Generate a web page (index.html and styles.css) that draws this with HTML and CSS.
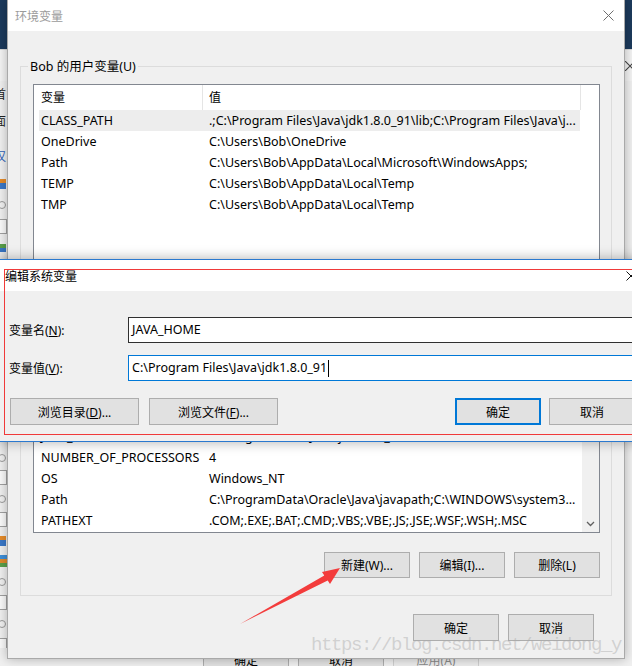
FILE: index.html
```html
<!DOCTYPE html>
<html lang="zh-CN">
<head>
<meta charset="utf-8">
<title>环境变量</title>
<link rel="stylesheet" href="styles.css">
</head>
<body>
<div class="desktop">

  <div class="bgwin">
    <div class="bgtitle">
      <svg class="bgclose" width="10" height="10" viewBox="0 0 10 10"><path d="M0 0L10 10M10 0L0 10" stroke="#444" stroke-width="1.1" fill="none"/></svg>
    </div>
    <div class="bgside">
      <span class="frag ch f1">首</span>
      <span class="frag ch f2">面</span>
      <span class="frag ch blue f3">仅</span>
      <span class="frag ico f4"></span>
      <span class="frag circ f5"></span>
      <span class="frag box f6"></span>
      <span class="frag ico green f7"></span>
      <span class="frag circ f8"></span>
      <span class="frag box f9"></span>
      <span class="frag circ f10"></span>
      <span class="frag box f11"></span>
      <span class="frag ico f12"></span>
      <span class="frag stripes f13"></span>
      <span class="frag circ f14"></span>
      <span class="frag box f15"></span>
      <span class="frag circ f16"></span>
      <span class="frag box f17"></span>
    </div>
    <div class="bgfooter">
      <span class="bgbtn">确定</span>
      <span class="bgbtn">取消</span>
      <span class="bgbtn dis">应用(A)</span>
    </div>
  </div>

  <section class="win main">
    <header class="titlebar">
      <span class="title">环境变量</span>
      <svg class="close" width="11" height="11" viewBox="0 0 11 11"><path d="M0.5 0.5L10.5 10.5M10.5 0.5L0.5 10.5" stroke="#6e6e6e" stroke-width="1" fill="none"/></svg>
    </header>
    <div class="mainbody">
      <fieldset class="group g-user">
        <legend>Bob 的用户变量(U)</legend>
        <div class="list l-user">
          <div class="list-rows">
            <div class="lhead"><span class="hc hc1">变量</span><span class="hc hc2">值</span></div>
            <div class="row sel"><span class="cell">CLASS_PATH</span><span class="cell">.;C:\Program Files\Java\jdk1.8.0_91\lib;C:\Program Files\Java\j...</span></div>
            <div class="row"><span class="cell">OneDrive</span><span class="cell">C:\Users\Bob\OneDrive</span></div>
            <div class="row"><span class="cell">Path</span><span class="cell">C:\Users\Bob\AppData\Local\Microsoft\WindowsApps;</span></div>
            <div class="row"><span class="cell">TEMP</span><span class="cell">C:\Users\Bob\AppData\Local\Temp</span></div>
            <div class="row"><span class="cell">TMP</span><span class="cell">C:\Users\Bob\AppData\Local\Temp</span></div>
          </div>
          <div class="gutter"></div>
        </div>
        <div class="btnrow">
          <button class="btn">新建(N)...</button>
          <button class="btn">编辑(E)...</button>
          <button class="btn">删除(D)</button>
        </div>
      </fieldset>

      <fieldset class="group g-sys">
        <legend>系统变量(S)</legend>
        <div class="list l-sys">
          <div class="list-rows scrolled">
            <div class="lhead"><span class="hc hc1">变量</span><span class="hc hc2">值</span></div>
            <div class="row"><span class="cell">ComSpec</span><span class="cell">C:\WINDOWS\system32\cmd.exe</span></div>
            <div class="row"><span class="cell">DriverData</span><span class="cell">C:\Windows\System32\Drivers\DriverData</span></div>
            <div class="row"><span class="cell">JAVA_HOME</span><span class="cell">C:\Program Files\Java\jdk1.8.0_91</span></div>
            <div class="row"><span class="cell">NUMBER_OF_PROCESSORS</span><span class="cell">4</span></div>
            <div class="row"><span class="cell">OS</span><span class="cell">Windows_NT</span></div>
            <div class="row"><span class="cell">Path</span><span class="cell">C:\ProgramData\Oracle\Java\javapath;C:\WINDOWS\system3...</span></div>
            <div class="row"><span class="cell">PATHEXT</span><span class="cell">.COM;.EXE;.BAT;.CMD;.VBS;.VBE;.JS;.JSE;.WSF;.WSH;.MSC</span></div>
          </div>
          <div class="vscroll">
            <svg class="chev" width="17" height="17" viewBox="0 0 17 17"><path d="M5 7L8.5 10.5L12 7" stroke="#606060" stroke-width="1.3" fill="none"/></svg>
          </div>
        </div>
        <div class="btnrow">
          <button class="btn">新建(W)...</button>
          <button class="btn">编辑(I)...</button>
          <button class="btn">删除(L)</button>
        </div>
      </fieldset>

      <div class="footer">
        <button class="btn tall">确定</button>
        <button class="btn tall">取消</button>
      </div>
    </div>
  </section>

  <section class="win dialog">
    <header class="dtitle">
      <span class="dtext">编辑系统变量</span>
      <svg class="dclose" width="10" height="10" viewBox="0 0 10 10"><path d="M0.5 0.5L9.5 9.5M9.5 0.5L0.5 9.5" stroke="#111" stroke-width="1" fill="none"/></svg>
    </header>
    <div class="dbody">
      <div class="form">
        <label class="flabel">变量名(<u>N</u>):</label>
        <div class="input">JAVA_HOME</div>
        <label class="flabel">变量值(<u>V</u>):</label>
        <div class="input focus">C:\Program Files\Java\jdk1.8.0_91<span class="caret"></span></div>
      </div>
      <div class="dbtns">
        <button class="btn browse">浏览目录(<u>D</u>)...</button>
        <button class="btn browse">浏览文件(<u>F</u>)...</button>
        <span class="spacer"></span>
        <button class="btn tall default">确定</button>
        <button class="btn tall">取消</button>
      </div>
    </div>
  </section>

  <div class="annot"></div>

  <svg class="arrow" width="632" height="666" viewBox="0 0 632 666">
    <polygon points="240,624 324.3,575.5 322,572 340,568 330,584 327.7,580.5" fill="#f33c3c"/>
  </svg>

  <div class="watermark">https://blog.csdn.net/weidong_y</div>
</div>
</body>
</html>
```

FILE: styles.css
```css
* { box-sizing: border-box; }
html, body { margin: 0; padding: 0; }
body {
  width: 632px;
  height: 666px;
  overflow: hidden;
  font-family: "Noto Sans", "Noto Sans CJK SC", sans-serif;
  font-size: 12.5px;
  color: #000;
}
.desktop {
  position: relative;
  width: 632px;
  height: 666px;
  overflow: hidden;
  background: #1c3a5c;
}

/* ---------- background window ---------- */
.bgwin {
  position: absolute;
  left: 0;
  top: 49px;
  width: 632px;
  height: 637px;
  background: #f0f0f0;
  border-top: 1px solid #d8d8d8;
  display: flex;
  flex-direction: column;
}
.bgtitle {
  height: 31px;
  display: flex;
  justify-content: flex-end;
  align-items: center;
  background: #f4f4f4;
}
.bgclose { margin-right: -3px; }
.bgside {
  flex: 1;
  display: flex;
  flex-direction: column;
  overflow: hidden;
  width: 7px;
}
.frag { display: block; flex: none; }
.ch { font-size: 12px; line-height: 14px; height: 14px; margin-left: -6px; color: #222; font-family: "Noto Sans CJK SC", sans-serif; }
.ch.blue { color: #2f62b8; }
.f1 { margin-top: 6px; }
.f2 { margin-top: 13px; }
.f3 { margin-top: 21px; }
.ico { width: 6px; height: 10px; background: linear-gradient(#e58b2a 0 40%, #3a78c8 40% 100%); }
.ico.green { height: 8px; background: linear-gradient(#5aa04b 0 50%, #3a78c8 50% 100%); }
.f4 { margin-top: 16px; }
.circ { width: 8px; height: 8px; border: 1px solid #9a9a9a; border-radius: 50%; margin-left: -2px; }
.box { width: 7px; height: 15px; border: 1px solid #a0a0a0; border-left: none; background: #fafafa; margin-left: 0; }
.f5 { margin-top: 12px; }
.f6 { margin-top: 10px; }
.f7 { margin-top: 10px; }
.f8 { margin-top: 202px; }
.f9 { margin-top: 8px; }
.f10 { margin-top: 10px; }
.f11 { margin-top: 9px; }
.f12 { margin-top: 9px; }
.stripes { width: 7px; height: 12px; background: linear-gradient(#3f8fd8 0 33%, #e08a2c 33% 66%, #5aa04b 66% 100%); }
.f13 { margin-top: 9px; }
.f14 { margin-top: 11px; }
.f15 { margin-top: 9px; }
.f16 { margin-top: 10px; }
.f17 { margin-top: 10px; }
.bgfooter {
  flex: none;
  display: flex;
  gap: 9px;
  padding-left: 203px;
  padding-bottom: 12px;
}
.bgbtn {
  width: 86px;
  height: 26px;
  line-height: 24px;
  text-align: center;
  background: #e1e1e1;
  border: 1px solid #adadad;
  font-size: 12px;
}
.bgbtn.dis { color: #8a8a8a; background: #ececec; border-color: #cfcfcf; }

/* ---------- windows ---------- */
.win { position: absolute; }
.main {
  left: 7px;
  top: -1px;
  width: 618px;
  height: 660px;
  background: #f0f0f0;
  border: 1px solid #a9a9a9;
  box-shadow: 0 0 10px rgba(0, 0, 0, 0.28);
  display: flex;
  flex-direction: column;
}
.titlebar {
  height: 31px;
  flex: none;
  background: #fff;
  display: flex;
  align-items: center;
  justify-content: space-between;
  padding-left: 7px;
}
.title { color: #9b9b9b; font-size: 12px; font-family: "Noto Sans CJK SC", sans-serif; }
.close { margin-right: 10px; }
.mainbody {
  padding: 0 12px 0 12px;
  display: flex;
  flex-direction: column;
}

.group {
  margin: 0;
  border: 1px solid #dcdcdc;
  padding: 10px 11px 17px 12px;
  min-width: 0;
}
.group legend {
  padding: 0 2px;
  margin-left: -5px;
  line-height: 15px;
}
.g-user { margin-top: 28px; }
.g-sys { margin-top: 8px; }

.list {
  display: flex;
  background: #fff;
  border: 1px solid #828790;
}
.l-user { height: 190px; }
.l-sys { height: 163px; }
.list-rows {
  width: 547px;
  display: flex;
  flex-direction: column;
  overflow: hidden;
}
.list-rows.scrolled {
  justify-content: flex-end;
  padding-bottom: 1px;
}
.gutter { flex: 1; }
.vscroll {
  flex: 1;
  background: #f0f0f0;
  display: flex;
  flex-direction: column;
  justify-content: flex-end;
  margin-left: 1px;
}
.chev { display: block; }
.lhead {
  flex: none;
  display: flex;
  height: 25px;
}
.hc {
  display: block;
  line-height: 24px;
  font-size: 12px;
  border-right: 1px solid #e5e5e5;
  font-family: "Noto Sans CJK SC", sans-serif;
}
.hc1 { width: 169px; padding-left: 7px; }
.hc2 { width: 378px; padding-left: 6px; }
.row {
  flex: none;
  display: grid;
  grid-template-columns: 168px 1fr;
  height: 21px;
  width: 541px;
  margin-left: 5px;
  align-items: center;
}
.row.sel { background: #ededed; }
.cell {
  padding-left: 2px;
  white-space: nowrap;
  overflow: hidden;
  line-height: 21px;
}

.btnrow {
  display: flex;
  justify-content: flex-end;
  gap: 9px;
  margin-top: 19px;
}
.btn {
  font: inherit;
  font-size: 12px;
  color: #000;
  width: 86px;
  height: 26px;
  padding: 0;
  margin: 0;
  background: #e1e1e1;
  border: 1px solid #adadad;
  border-radius: 0;
  flex: none;
}
.btn.tall { height: 27px; }
.footer {
  display: flex;
  justify-content: flex-end;
  gap: 9px;
  margin-top: 18px;
  padding-right: 18px;
}

/* ---------- edit dialog ---------- */
.dialog {
  left: -3px;
  top: 259px;
  width: 659px;
  background: #f0f0f0;
  border: 1px solid #2b79cf;
  box-shadow: 0 0 12px rgba(0, 0, 0, 0.32);
}
.dtitle {
  height: 31px;
  background: #fff;
  display: flex;
  align-items: center;
  justify-content: space-between;
  padding-left: 7px;
}
.dtext { font-size: 12px; font-family: "Noto Sans CJK SC", sans-serif; margin-top: -1px; }
.dclose { margin-right: 19px; }
.dbody { padding: 26px 20px 16px 11px; }
.form {
  display: grid;
  grid-template-columns: 119px 1fr;
  row-gap: 12px;
  align-items: center;
}
.flabel { white-space: nowrap; font-size: 12px; }
.input {
  height: 26px;
  background: #fff;
  border: 1px solid #303030;
  padding-left: 3px;
  line-height: 24px;
  white-space: nowrap;
  display: flex;
  align-items: center;
}
.input.focus { border-color: #0078d7; }
.caret {
  display: inline-block;
  width: 1px;
  height: 17px;
  background: #000;
  margin-left: 1px;
}
.dbtns {
  display: flex;
  align-items: center;
  margin-top: 17px;
  padding-left: 1px;
}
.btn.browse { width: 129px; height: 27px; margin-right: 10px; }
.spacer { flex: 1; }
.btn.default { border: 2px solid #0078d7; margin-right: 8px; }

/* ---------- overlays ---------- */
.annot {
  position: absolute;
  left: 4px;
  top: 269px;
  width: 700px;
  height: 166px;
  border: 1px solid #f03a3a;
}
.arrow {
  position: absolute;
  left: 0;
  top: 0;
  pointer-events: none;
}
.watermark {
  position: absolute;
  left: 311px;
  top: 634px;
  font-family: "Liberation Mono", monospace;
  font-size: 19px;
  letter-spacing: -1.4px;
  line-height: 22px;
  color: rgba(170, 170, 170, 0.45);
  white-space: nowrap;
}
```
